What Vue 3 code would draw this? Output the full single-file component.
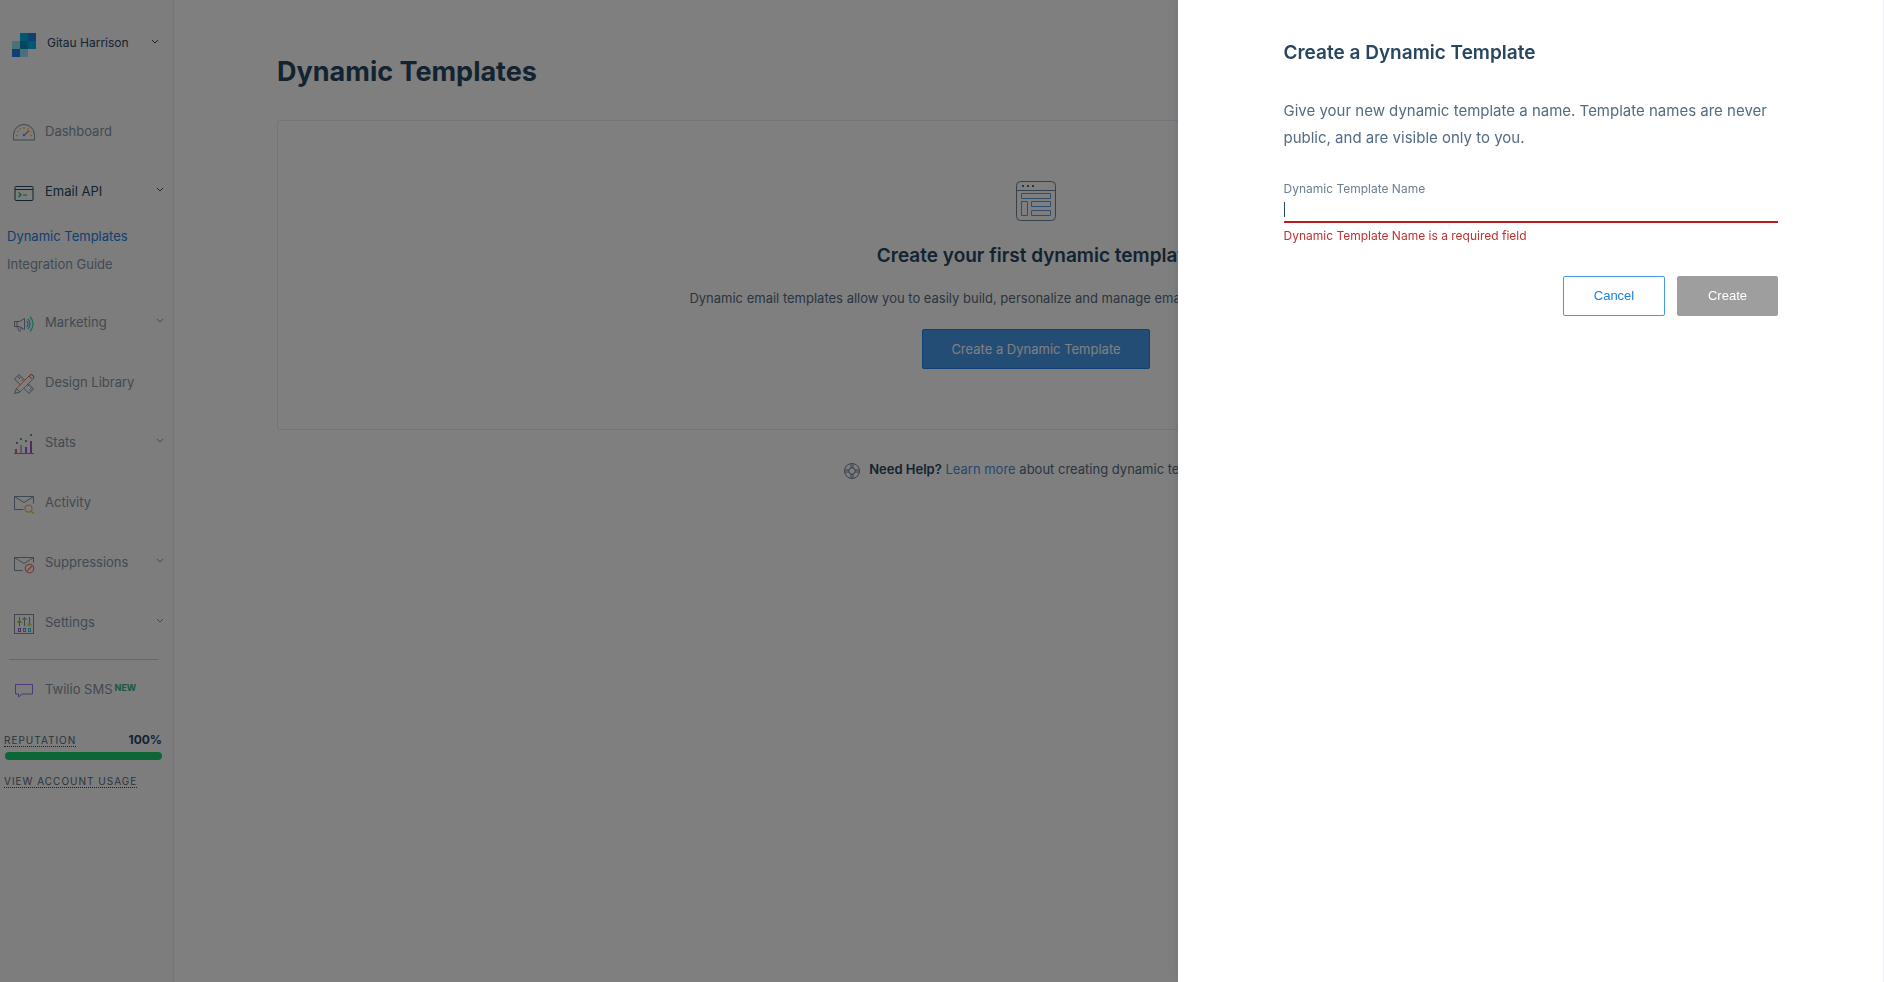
<script setup>
import { ref, onMounted } from 'vue'

const name = ref('')
const nameField = ref(null)
onMounted(() => nameField.value.focus())

const items = [
  { id: 'dashboard', label: 'Dashboard' },
  {
    id: 'email', label: 'Email API', menu: true, active: true,
    children: [
      { label: 'Dynamic Templates', current: true },
      { label: 'Integration Guide' },
    ],
  },
  { id: 'marketing', label: 'Marketing', menu: true },
  { id: 'design', label: 'Design Library' },
  { id: 'stats', label: 'Stats', menu: true },
  { id: 'activity', label: 'Activity' },
  { id: 'suppressions', label: 'Suppressions', menu: true },
  { id: 'settings', label: 'Settings', menu: true },
]
</script>

<template>
  <div class="app">
    <aside class="sidebar">
      <button class="account" type="button">
        <svg class="logo" viewBox="0 0 24 24" shape-rendering="crispEdges" aria-hidden="true">
          <path fill="#00b2e3" d="M8 0h8v8H8zM16 8h8v8h-8z" />
          <path fill="#1a82e2" d="M16 0h8v8h-8zM0 16h8v8H0z" />
          <path fill="#99e1f4" d="M0 8h8v8H0zM8 16h8v8H8z" />
          <path fill="#0090c0" d="M8 8h8v8H8z" />
        </svg>
        <span class="account-name">Gitau Harrison</span>
        <svg class="chevron" viewBox="0 0 8 6" aria-hidden="true"><path d="M1 1l3 3 3-3" /></svg>
      </button>

      <nav class="nav">
        <div v-for="item in items" :key="item.id">
          <a href="#" class="item" :class="{ active: item.active }">
            <svg v-if="item.id === 'dashboard'" class="icon" viewBox="0 0 22 20">
              <path d="M.500 17V12a10.500 10.500 0 0 1 21 0v5z" />
              <path stroke="#e8453c" stroke-width="1.500" d="M12 11.500l4-4" />
              <circle cx="11" cy="12" r="1.250" fill="#1a82e2" stroke="none" />
              <path stroke="#f5b623" stroke-width="1.500" d="M3 12.500h2M17 12.500h2M10 5h2M4.500 8.500h1.500M6.500 6h1.500M14.500 6h1.500M17 8.500h1" />
            </svg>
            <svg v-else-if="item.id === 'email'" class="icon" viewBox="0 0 22 20">
              <rect x="2" y="3.500" width="18" height="14" rx="1" />
              <path d="M2 6.500h18" />
              <path stroke="#00c060" stroke-width="1.250" d="M5.500 9.500l2.500 2.250L5.500 14" />
              <path stroke="#5fbf2f" stroke-width="1.250" d="M10 12h4" />
            </svg>
            <svg v-else-if="item.id === 'marketing'" class="icon" viewBox="0 0 22 20">
              <path d="M1.500 7.500h5l5-3v11l-5-3h-5zM4 7.500v5" />
              <path stroke="#7a5bd0" d="M4.500 13l1.500 4h2M7 13l1.500 3" />
              <path stroke="#1a9de2" stroke-width="1.250" d="M13.500 7q3 3 0 6M15 5q4 5 0 10" />
              <path stroke="#12c47c" stroke-width="1.250" d="M17 2.500q6 7.500 0 15" />
            </svg>
            <svg v-else-if="item.id === 'design'" class="icon" viewBox="0 0 22 20">
              <path d="M1.500 5l4.500-4.500 14.500 14.500-4.500 4.500zM4.500 2l2 2M7.500 3.500L6 5M10 5.500L8.500 7M14.500 12.500L16 11M17 15l1.500-1.500M16.500 17l1.500-1.500" />
              <path fill="#fafafb" stroke="#f0553c" d="M3.500 14.500L17 1q1.500-1 3 .5t.5 3L7 18z" />
              <path stroke="#d92b2b" d="M16 2l3.500 3.500M17 1q1.500-1 3 .5t.5 3" />
              <path fill="#fafafb" d="M3.500 14.500L7 18l-5.500 1.500z" />
            </svg>
            <svg v-else-if="item.id === 'stats'" class="icon" viewBox="0 0 22 20">
              <path d="M1 19.500h20" />
              <path stroke="#e2264d" stroke-width="2" d="M3 19v-4" />
              <path stroke="#c08be0" stroke-width="2" d="M8 19v-8" />
              <path stroke="#6a35e0" stroke-width="2" d="M13 19v-6" />
              <path stroke="#8a1fa8" stroke-width="2" d="M18 19V7" />
              <path stroke-width="2" d="M3 9h2M7 5h2M12 7h2M17 1h2" />
            </svg>
            <svg v-else-if="item.id === 'activity'" class="icon" viewBox="0 0 22 20">
              <path d="M10.500 15.500h-9v-13h19v7M1.500 2.500l9.500 6 9.500-6" />
              <g stroke="#f5a010" stroke-width="1.250"><circle cx="15.500" cy="14.500" r="3.500" /><path d="M18 17l3 3" /></g>
            </svg>
            <svg v-else-if="item.id === 'suppressions'" class="icon" viewBox="0 0 22 20">
              <path d="M9.500 16.500h-8v-13h19v5M1.500 3.500l9.500 6 9.500-6" />
              <g stroke="#f0553c" stroke-width="1.250"><circle cx="16.500" cy="14.500" r="4.250" /><path d="M13.500 17.500l6-6" /></g>
            </svg>
            <svg v-else class="icon" viewBox="0 0 22 20">
              <rect x="1.500" y=".500" width="19" height="19" />
              <path d="M6.500 3v9M11.500 3v9M16.500 3v9" />
              <path stroke="#5cc01f" stroke-width="2" d="M4.500 8h4M9.500 5h4" />
              <path stroke="#c8d010" stroke-width="2" d="M14.500 10.500h4" />
              <rect stroke="#5a35d0" x="5.500" y="14.500" width="2" height="3" />
              <rect stroke="#1a82e2" x="10.500" y="14.500" width="2" height="3" />
              <rect stroke="#00b2e3" x="15.500" y="14.500" width="2" height="3" />
            </svg>
            <span>{{ item.label }}</span>
            <svg v-if="item.menu" class="chevron" viewBox="0 0 8 6" aria-hidden="true"><path d="M1 1l3 3 3-3" /></svg>
          </a>
          <div v-if="item.children" class="sub">
            <a v-for="child in item.children" :key="child.label" href="#" :class="{ current: child.current }">{{ child.label }}</a>
          </div>
        </div>
      </nav>

      <hr class="rule">

      <a href="#" class="item">
        <svg class="icon" viewBox="0 0 22 20">
          <path stroke="#7b3ff0" d="M2.500 3.500h17v9.500H9l-3.500 3v-3h-3z" />
        </svg>
        <span>Twilio SMS</span>
        <sup class="new">NEW</sup>
      </a>

      <div class="usage">
        <div class="rep">
          <a href="#" class="caps">Reputation</a>
          <strong>100%</strong>
        </div>
        <div class="bar"></div>
        <a href="#" class="caps">View account usage</a>
      </div>
    </aside>

    <main class="main">
      <h1>Dynamic Templates</h1>
      <section class="card">
        <svg class="template-icon" viewBox="0 0 40 40" aria-hidden="true">
          <rect x=".500" y=".500" width="39" height="39" rx="4" stroke="#6f8296" />
          <path d="M.5 9.500h39" stroke="#6f8296" />
          <path d="M6 5h2M11 5h2M16 5h2" stroke="#546b81" stroke-width="2" />
          <path d="M5.500 12.500h29v5h-29zM5.500 20.500h6v14h-6zM15.500 20.500h19v5h-19zM15.500 29.500h19v5h-19z" stroke="#5c9ddf" />
        </svg>
        <h2>Create your first dynamic template</h2>
        <p>Dynamic email templates allow you to easily build, personalize and manage emails using the web interface or API</p>
        <button class="primary" type="button">Create a Dynamic Template</button>
      </section>
      <p class="help">
        <svg class="help-icon" viewBox="0 0 16 16" aria-hidden="true">
          <circle cx="8" cy="8" r="7.500" /><circle cx="8" cy="8" r="3.250" />
          <path d="M7 1v4M9 1v4M7 11v4M9 11v4M1 7h4M1 9h4M11 7h4M11 9h4" />
        </svg>
        <span><strong>Need Help?</strong> <a href="#">Learn more</a> about creating dynamic templates</span>
      </p>
    </main>

    <div class="overlay"></div>
    <form class="drawer" role="dialog" aria-labelledby="drawer-title" @submit.prevent>
      <h2 id="drawer-title">Create a Dynamic Template</h2>
      <p>Give your new dynamic template a name. Template names are never public, and are visible only to you.</p>
      <label for="template-name">Dynamic Template Name</label>
      <input id="template-name" ref="nameField" v-model="name" :class="{ empty: !name }" type="text" autocomplete="off" aria-describedby="template-error">
      <span id="template-error" class="error">Dynamic Template Name is a required field</span>
      <div class="actions">
        <button class="cancel" type="button">Cancel</button>
        <button class="create" type="submit" disabled>Create</button>
      </div>
    </form>
  </div>
</template>

<style>
body {
  margin: 0;
  background: #fff;
}
</style>

<style scoped>
.app {
  display: flex;
  min-height: 100vh;
  color: #294661;
  font: 13px/20px Inter, "Liberation Sans", sans-serif;
}
a {
  color: inherit;
  text-decoration: none;
}
h1, h2, p {
  margin: 0;
}
svg {
  flex: none;
  fill: none;
}

.sidebar {
  box-sizing: border-box;
  flex: none;
  width: 174px;
  border-right: 1px solid #e9ebee;
  background: #fafafb;
}
.account {
  display: flex;
  align-items: center;
  box-sizing: border-box;
  width: 100%;
  height: 86px;
  padding: 0 14px 0 12px;
  border: 0;
  background: none;
  color: #294661;
  font: 12px/20px Inter, "Liberation Sans", sans-serif;
  text-align: left;
}
.logo {
  width: 24px;
  height: 24px;
  margin: 4px 11px 0 0;
}
.chevron {
  width: 8px;
  height: 6px;
  margin: 0 0 2px auto;
  stroke: currentColor;
}
.nav {
  margin-top: 15px;
}
.item {
  display: flex;
  align-items: center;
  height: 60px;
  padding: 0 9px 0 13px;
  color: #8494a4;
}
.item.active {
  color: #294661;
}
.icon {
  width: 22px;
  height: 20px;
  margin: 4px 10px 0 0;
  stroke: #546b81;
  opacity: .75;
}
.active .icon {
  stroke: #294661;
  opacity: 1;
}
.sub {
  display: flex;
  flex-direction: column;
  gap: 8px;
  padding: 5px 0 18px 7px;
  color: #8494a4;
}
.current {
  color: #1a82e2;
}
.rule {
  margin: 7px 15px 0 9px;
  border: 0;
  border-top: 1px solid #c9cfd6;
}
.rule + .item {
  height: 58px;
}
.new {
  margin: 0 0 4px 2px;
  color: #2fb574;
  font-size: 9px;
  font-weight: 700;
  line-height: 9px;
}
.usage {
  padding: 12px 11px 0 4px;
}
.rep {
  display: flex;
  align-items: center;
  justify-content: space-between;
}
.caps {
  border-bottom: 1px dotted #294661;
  color: #546b81;
  font-size: 10px;
  line-height: 12px;
  letter-spacing: 1px;
  text-transform: uppercase;
}
.rep strong {
  font-size: 12px;
}
.bar {
  height: 8px;
  margin: 2px 0 10px 1px;
  border-radius: 4px;
  background: #18cc6c;
}

.main {
  flex: 1;
  min-width: 0;
  padding: 52px 89px 0 103px;
}
h1 {
  font-size: 27px;
  font-weight: 700;
  line-height: 40px;
}
.card {
  display: flex;
  flex-direction: column;
  align-items: center;
  margin-top: 28px;
  padding: 60px 0;
  border: 1px solid #e9ebee;
  border-radius: 2px;
}
.template-icon {
  width: 40px;
  height: 40px;
}
.card h2 {
  margin-top: 20px;
  font-size: 19px;
  font-weight: 600;
  line-height: 30px;
}
.card p {
  margin: 17px 0 21px;
  color: #546b81;
}
.primary {
  height: 40px;
  padding: 0 28px;
  border: 1px solid #1a82e2;
  border-radius: 2px;
  background: #469aea;
  color: #fff;
  font: inherit;
}
.help {
  display: flex;
  align-items: center;
  justify-content: center;
  gap: 9px;
  margin-top: 29px;
  color: #546b81;
}
.help strong {
  color: #294661;
  font-weight: 600;
}
.help a {
  color: #4a8fd4;
}
.help-icon {
  width: 16px;
  height: 16px;
  margin-top: 4px;
  stroke: #6f8296;
}

.overlay {
  position: fixed;
  inset: 0;
  background: rgba(0, 0, 0, .5);
}
.drawer {
  position: fixed;
  top: 0;
  right: 0;
  bottom: 0;
  display: flex;
  flex-direction: column;
  box-sizing: border-box;
  width: 37.5%;
  padding: 38px 105px 0 106px;
  border-right: 1px solid #e9ebee;
  background: #fff;
  box-shadow: 0 0 12px rgba(41, 70, 97, .2);
}
.drawer h2 {
  font-size: 19px;
  font-weight: 600;
  line-height: 30px;
}
.drawer p {
  margin: 29px 0 30px;
  color: #546b81;
  font-size: 15px;
  line-height: 27px;
}
label, .error {
  color: #6b7f92;
  font-size: 12px;
  line-height: 16px;
}
input {
  height: 24px;
  padding: 0;
  border: 0;
  border-bottom: 2px solid #bb1a1e;
  background: none;
  caret-color: #294661;
  color: #294661;
  font: inherit;
  outline: 0;
}
input.empty {
  background: linear-gradient(#294661, #294661) no-repeat 0 5px / 1px 15px;
}
.error {
  margin-top: 5px;
  color: #c2302f;
}
.actions {
  display: flex;
  justify-content: flex-end;
  gap: 12px;
  margin-top: 32px;
}
.actions button {
  height: 40px;
  padding: 0 0 2px;
  border: 1px solid #469aea;
  border-radius: 2px;
  background: #fff;
  color: #1a82e2;
  font: 13px "Liberation Sans", sans-serif;
}
.cancel {
  width: 102px;
}
.actions .create {
  width: 101px;
  border-color: #9e9e9e;
  background: #9e9e9e;
  color: #fff;
}
</style>
